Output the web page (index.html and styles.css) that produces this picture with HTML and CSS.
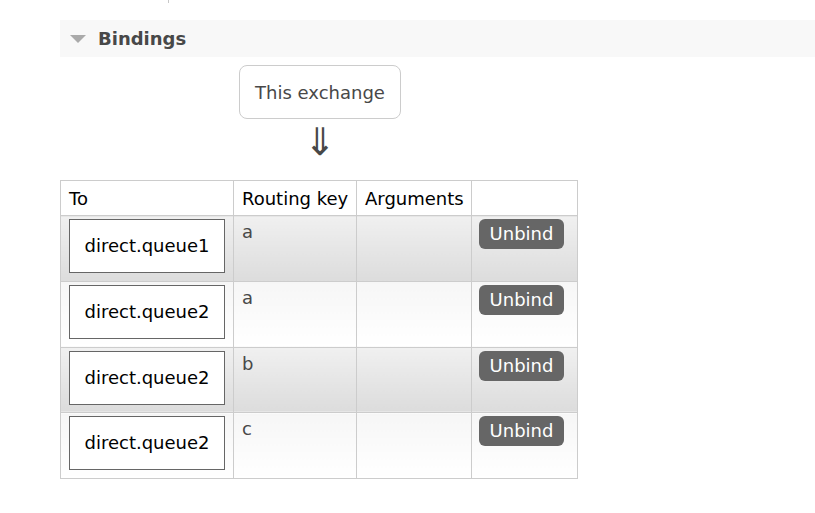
FILE: index.html
```html
<!DOCTYPE html>
<html>
<head>
<meta charset="utf-8">
<link rel="stylesheet" href="styles.css">
</head>
<body>
<div class="tick"></div>
<div class="section">
  <h2 class="section-head"><span class="tri"></span>Bindings</h2>
  <div class="diagram">
    <div class="exchange-box">This exchange</div>
    <div class="arrow">⇓</div>
  </div>
  <table class="list">
    <colgroup>
      <col class="c1"><col class="c2"><col class="c3"><col class="c4">
    </colgroup>
    <thead>
      <tr><th>To</th><th>Routing key</th><th>Arguments</th><th></th></tr>
    </thead>
    <tbody>
      <tr class="alt1">
        <td><span class="queue">direct.queue1</span></td>
        <td class="txt">a</td><td></td>
        <td class="act"><button class="unbind">Unbind</button></td>
      </tr>
      <tr class="alt2">
        <td><span class="queue">direct.queue2</span></td>
        <td class="txt">a</td><td></td>
        <td class="act"><button class="unbind">Unbind</button></td>
      </tr>
      <tr class="alt1">
        <td><span class="queue">direct.queue2</span></td>
        <td class="txt">b</td><td></td>
        <td class="act"><button class="unbind">Unbind</button></td>
      </tr>
      <tr class="alt2">
        <td><span class="queue">direct.queue2</span></td>
        <td class="txt">c</td><td></td>
        <td class="act"><button class="unbind">Unbind</button></td>
      </tr>
    </tbody>
  </table>
</div>
</body>
</html>
```
FILE: styles.css
```css
html, body {
  margin: 0;
  padding: 0;
  background: #fff;
}
body {
  font-family: "DejaVu Sans", Verdana, sans-serif;
  font-size: 18px;
  color: #484848;
}
.tick {
  margin-left: 168px;
  width: 1px;
  height: 3px;
  background: #c8c8c8;
}
.section {
  margin: 17px 0 0 60px;
}
.section-head {
  margin: 0;
  height: 37px;
  background: #f8f8f8;
  display: flex;
  align-items: center;
  padding-left: 10px;
  font-size: 18px;
  font-weight: bold;
  color: #484848;
}
.tri {
  width: 0;
  height: 0;
  border-left: 8px solid transparent;
  border-right: 8px solid transparent;
  border-top: 8px solid #aaa;
  margin-right: 12px;
  margin-top: 1px;
}
.diagram {
  margin-left: 179px;
  width: 162px;
  padding-top: 8px;
  display: flex;
  flex-direction: column;
  align-items: center;
}
.exchange-box {
  box-sizing: border-box;
  width: 162px;
  height: 54px;
  border: 1px solid #ccc;
  border-radius: 8px;
  display: flex;
  align-items: center;
  justify-content: center;
}
.arrow {
  font-size: 38px;
  line-height: 42px;
  height: 42px;
  margin-top: 2px;
  margin-bottom: 17px;
  color: #484848;
}
table.list {
  border-collapse: collapse;
  table-layout: fixed;
  width: 517px;
}
.c1 { width: 173px; }
.c2 { width: 123px; }
.c3 { width: 115px; }
.c4 { width: 106px; }
table.list th,
table.list td {
  border: 1px solid #ccc;
  text-align: left;
  vertical-align: top;
  padding: 3px 8px 0 8px;
  white-space: nowrap;
}
table.list th {
  font-weight: normal;
  color: #000;
  height: 27px;
  padding-top: 7px;
  background: #fff;
  line-height: 22px;
}
table.list td {
  height: 61.75px;
  line-height: 22px;
}
table.list td.txt {
  padding-top: 5px;
  height: 59.75px;
}
table.list td.act {
  padding-left: 7px;
}
tr.alt1 td {
  background: linear-gradient(to bottom, #f0f0f0 0%, #dcdcdc 100%);
}
tr.alt2 td {
  background: linear-gradient(to bottom, #f6f6f6 0%, #ffffff 100%);
}
.queue {
  display: block;
  box-sizing: border-box;
  width: 156px;
  height: 54px;
  border: 1px solid #666;
  background: #fff;
  color: #000;
  text-align: center;
  line-height: 52px;
}
.unbind {
  display: block;
  font-family: "DejaVu Sans", Verdana, sans-serif;
  font-size: 18px;
  color: #fff;
  background: #666;
  border: none;
  border-radius: 6px;
  width: 85px;
  height: 30px;
  padding: 0;
  line-height: 30px;
}
```
